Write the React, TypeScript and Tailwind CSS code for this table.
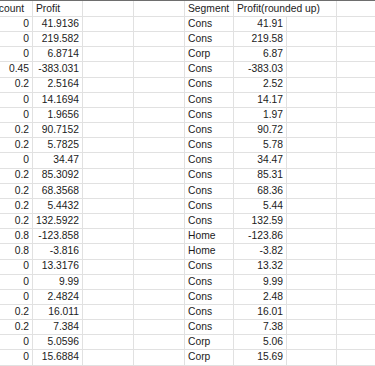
// Spreadsheet crop - discount / profit / segment columns
const rows: [string, string, string, string][] = [
  ['0', '41.9136', 'Cons', '41.91'],
  ['0', '219.582', 'Cons', '219.58'],
  ['0', '6.8714', 'Corp', '6.87'],
  ['0.45', '-383.031', 'Cons', '-383.03'],
  ['0.2', '2.5164', 'Cons', '2.52'],
  ['0', '14.1694', 'Cons', '14.17'],
  ['0', '1.9656', 'Cons', '1.97'],
  ['0.2', '90.7152', 'Cons', '90.72'],
  ['0.2', '5.7825', 'Cons', '5.78'],
  ['0', '34.47', 'Cons', '34.47'],
  ['0.2', '85.3092', 'Cons', '85.31'],
  ['0.2', '68.3568', 'Cons', '68.36'],
  ['0.2', '5.4432', 'Cons', '5.44'],
  ['0.2', '132.5922', 'Cons', '132.59'],
  ['0.8', '-123.858', 'Home', '-123.86'],
  ['0.8', '-3.816', 'Home', '-3.82'],
  ['0', '13.3176', 'Cons', '13.32'],
  ['0', '9.99', 'Cons', '9.99'],
  ['0', '2.4824', 'Cons', '2.48'],
  ['0.2', '16.011', 'Cons', '16.01'],
  ['0.2', '7.384', 'Cons', '7.38'],
  ['0', '5.0596', 'Corp', '5.06'],
  ['0', '15.6884', 'Corp', '15.69'],
];

const cell = 'flex items-end pb-[2px] px-[3px] border-r border-b border-[#e1e1e1] whitespace-nowrap';
const grid = 'grid grid-cols-[52px_50px_51px_51px_49px_53px_50px_80px]';

export default function App() {
  return (
    <div className="w-[375px] h-[366px] overflow-hidden bg-white text-[#1b1b1b] text-[10.3px] leading-none font-['Liberation_Sans',Arial,sans-serif]">
      <div className="h-[1px] bg-[#6e6e6e]" />
      <div className="ml-[-19px]">
        {/* Header */}
        <div className={`${grid} h-[16px]`}>
          <div className={cell}>Discount</div>
          <div className={cell}>Profit</div>
          <div className={cell} />
          <div className={cell} />
          <div className={cell}>Segment</div>
          <div className={`${cell} border-r-0`}>Profit(rounded up)</div>
          <div className={cell} />
          <div className={cell} />
        </div>

        {/* Rows */}
        {rows.map(([discount, profit, segment, rounded], i) => (
          <div key={i} className={`${grid} h-[15.17px]`}>
            <div className={`${cell} justify-end`}>{discount}</div>
            <div className={`${cell} justify-end`}>{profit}</div>
            <div className={cell} />
            <div className={cell} />
            <div className={cell}>{segment}</div>
            <div className={`${cell} justify-end`}>{rounded}</div>
            <div className={cell} />
            <div className={cell} />
          </div>
        ))}
      </div>
    </div>
  );
}
